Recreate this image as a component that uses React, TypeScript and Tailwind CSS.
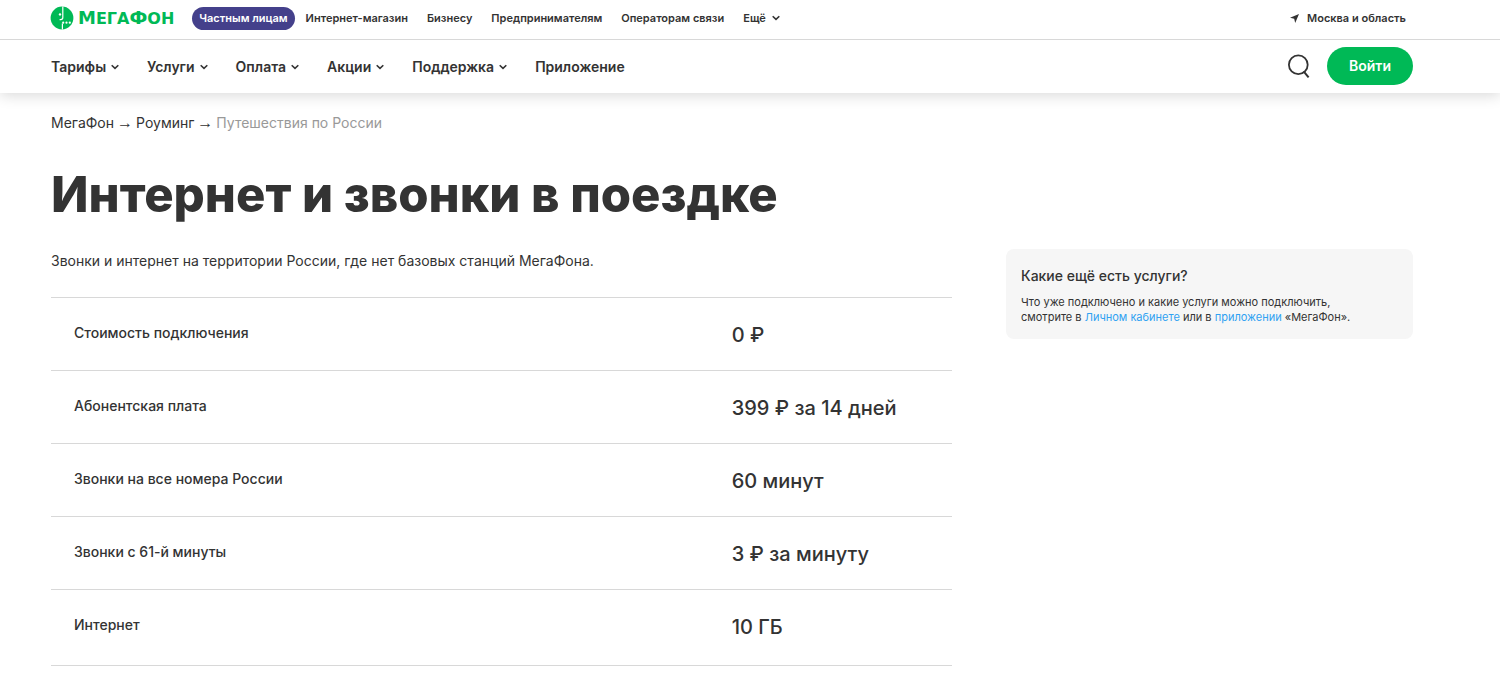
import React from 'react';

interface NavItem {
  label: string;
  menu?: boolean;
}

interface TariffRow {
  name: string;
  value: string;
}

const audienceLinks = ['Интернет-магазин', 'Бизнесу', 'Предпринимателям', 'Операторам связи'];

const navItems: NavItem[] = [
  { label: 'Тарифы', menu: true },
  { label: 'Услуги', menu: true },
  { label: 'Оплата', menu: true },
  { label: 'Акции', menu: true },
  { label: 'Поддержка', menu: true },
  { label: 'Приложение' },
];

const rows: TariffRow[] = [
  { name: 'Стоимость подключения', value: '0 ₽' },
  { name: 'Абонентская плата', value: '399 ₽ за 14 дней' },
  { name: 'Звонки на все номера России', value: '60 минут' },
  { name: 'Звонки с 61-й минуты', value: '3 ₽ за минуту' },
  { name: 'Интернет', value: '10 ГБ' },
];

const Chevron: React.FC = () => (
  <svg viewBox="0 0 8 6" className="h-[6px] w-2" fill="none" stroke="currentColor" strokeWidth="1.6" aria-hidden="true">
    <path d="M0.7 1.2 4 4.4 7.3 1.2" />
  </svg>
);

const Logo: React.FC = () => (
  <a href="#" className="flex items-center gap-1 text-[#00b956]">
    <svg viewBox="0 0 24 24" className="h-6 w-6" aria-hidden="true">
      <circle cx="12" cy="12" r="11.4" fill="currentColor" />
      <path d="M12.8 0.4v11.2c0 1.3-.7 2-2 2H9.6" fill="none" stroke="#fff" strokeWidth="1.2" />
      <path d="M12.4 17.6V23.6" fill="none" stroke="#fff" strokeWidth="1.2" />
      <circle cx="10" cy="8.4" r="1.2" fill="#fff" />
      <circle cx="13.2" cy="16.7" r="1.1" fill="#fff" />
      <circle cx="16.5" cy="16.7" r="1.1" fill="#fff" />
      <circle cx="19.8" cy="16.7" r="1.1" fill="#fff" />
    </svg>
    <span className="font-['DejaVu_Sans'] text-[18px] leading-6 font-bold">
      М<span className="text-[16px]">ЕГА</span>Ф<span className="text-[16px]">ОН</span>
    </span>
  </a>
);

const Header: React.FC = () => (
  <header className="bg-white shadow-[0_2px_14px_rgba(0,0,0,0.16)]">
    <div className="border-b border-[#d8d8d8]">
      <div className="flex h-[39px] items-center justify-between pr-[94px] pl-[50px] text-[11px] font-semibold">
        <div className="flex items-center pb-[3px]">
          <Logo />
          <nav className="ml-[18px] flex items-center gap-[19px]">
            <a href="#" className="-mr-2 rounded-full bg-[#44408b] px-[7px] py-[3px] leading-[17px] text-white">
              Частным лицам
            </a>
            {audienceLinks.map((label) => (
              <a key={label} href="#">{label}</a>
            ))}
            <button type="button" className="flex items-center gap-[6px]">
              Ещё <Chevron />
            </button>
          </nav>
        </div>
        <button type="button" className="flex items-center gap-2 pb-[2px]">
          <svg viewBox="0 0 9 9" className="h-[9px] w-[9px]" fill="currentColor" aria-hidden="true">
            <path d="M9 0 5.2 9 4.2 4.8 0 3.8Z" />
          </svg>
          Москва и область
        </button>
      </div>
    </div>

    <div className="flex h-[53px] items-center justify-between pr-[87px] pl-[51px]">
      <nav className="flex items-center gap-7 text-[14px] font-semibold">
        {navItems.map((item) =>
          item.menu ? (
            <button key={item.label} type="button" className="flex items-center gap-[5px]">
              {item.label} <Chevron />
            </button>
          ) : (
            <a key={item.label} href="#">{item.label}</a>
          )
        )}
      </nav>
      <div className="flex items-center gap-4 pb-[2px]">
        <button type="button" aria-label="Поиск">
          <svg viewBox="0 0 24 24" className="h-6 w-6" fill="none" stroke="currentColor" strokeWidth="1.8" aria-hidden="true">
            <circle cx="11.3" cy="10.8" r="9.4" />
            <path d="m16.6 17.4 5 6" strokeWidth="2" />
          </svg>
        </button>
        <button type="button" className="h-[38px] rounded-full bg-[#00b956] px-[22px] text-[14px] font-semibold text-white">
          Войти
        </button>
      </div>
    </div>
  </header>
);

const App: React.FC = () => (
  <div className="min-h-screen bg-white font-['Inter','Liberation_Sans',sans-serif] text-[#333]">
    <Header />

    <main className="pr-[87px] pl-[51px]">
      <nav aria-label="Навигационная цепочка" className="flex gap-[3px] pt-5 text-[14px] leading-5">
        <a href="#">МегаФон</a>
        <span className="font-['Liberation_Sans'] text-[16px]">→</span>
        <a href="#">Роуминг</a>
        <span className="font-['Liberation_Sans'] text-[16px]">→</span>
        <span className="text-[#999]">Путешествия по России</span>
      </nav>

      <h1 className="mt-8 text-[49px] leading-[60px] font-extrabold">Интернет и звонки в поездке</h1>

      <div className="mt-6 flex items-start gap-[54px]">
        <section className="flex-1">
          <p className="text-[14px] leading-6">
            Звонки и интернет на территории России, где нет базовых станций МегаФона.
          </p>
          <table className="mt-6 w-full border-t border-[#d8d8d8] text-left">
            <tbody>
              {rows.map((row) => (
                <tr key={row.name} className="h-[73px] border-b border-[#d8d8d8] last:h-[76px]">
                  <th scope="row" className="w-[73%] pt-[23px] pl-[23px] align-top text-[14px] leading-6 font-medium">
                    {row.name}
                  </th>
                  <td className="pt-[23px] pl-[23px] align-top text-[20px] leading-7 font-medium">{row.value}</td>
                </tr>
              ))}
            </tbody>
          </table>
        </section>

        <aside className="w-[407px] rounded-lg bg-[#f6f6f6] px-[15px] pt-[15px] pb-[14px]">
          <h2 className="text-[14px] leading-6 font-medium">Какие ещё есть услуги?</h2>
          <p className="mt-[7px] text-[11px] leading-[15px]">
            Что уже подключено и какие услуги можно подключить,
            <br />
            смотрите в <a href="#" className="text-[#30a2f2]">Личном кабинете</a> или в{' '}
            <a href="#" className="text-[#30a2f2]">приложении</a> «МегаФон».
          </p>
        </aside>
      </div>
    </main>
  </div>
);

export default App;
